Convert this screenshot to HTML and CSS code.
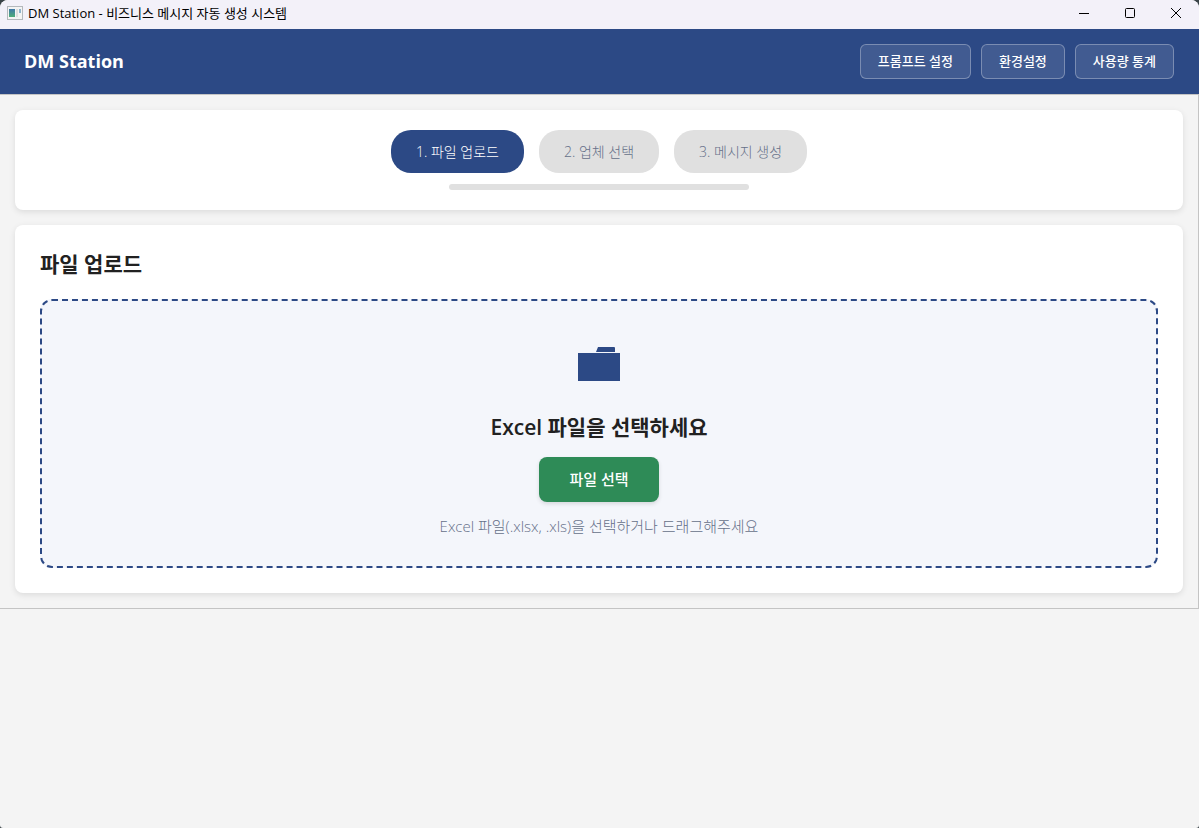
FILE: index.html
```html
<!DOCTYPE html>
<html lang="ko">
<head>
    <meta charset="UTF-8">
    <meta name="viewport" content="width=device-width, initial-scale=1.0">
    <title>DM Station - 비즈니스 메시지 자동 생성 시스템</title>
    <link rel="stylesheet" href="styles.css">
</head>
<body>
    <div class="window">
        <div class="titlebar">
            <svg class="app-icon" width="16" height="14" viewBox="0 0 16 14">
                <defs>
                    <linearGradient id="pane" x1="0" y1="0" x2="0" y2="1">
                        <stop offset="0" stop-color="#3f78a8"/>
                        <stop offset="1" stop-color="#4fae78"/>
                    </linearGradient>
                </defs>
                <rect x="0.5" y="0.5" width="15" height="13" fill="#f4f4f4" stroke="#b4b8bc"/>
                <rect x="2" y="3" width="6" height="8" fill="url(#pane)"/>
                <rect x="9" y="3" width="2" height="8" fill="#dedede"/>
                <rect x="12" y="3" width="2" height="4" fill="#8fb4cc"/>
            </svg>
            <span class="window-title">DM Station - 비즈니스 메시지 자동 생성 시스템</span>
            <div class="window-controls">
                <button type="button" aria-label="최소화">
                    <svg width="12" height="12" viewBox="0 0 12 12"><path d="M1 6.5h10" stroke="#000" fill="none"/></svg>
                </button>
                <button type="button" aria-label="최대화">
                    <svg width="12" height="12" viewBox="0 0 12 12"><rect x="1.5" y="1.5" width="9" height="9" rx="1" stroke="#000" fill="none"/></svg>
                </button>
                <button type="button" aria-label="닫기">
                    <svg width="12" height="12" viewBox="0 0 12 12"><path d="M1 1l10 10M11 1L1 11" stroke="#000" fill="none"/></svg>
                </button>
            </div>
        </div>

        <header class="header">
            <h1>DM Station</h1>
            <nav class="header-buttons">
                <button type="button">프롬프트 설정</button>
                <button type="button">환경설정</button>
                <button type="button">사용량 통계</button>
            </nav>
        </header>

        <main class="content">
            <section class="card steps-card">
                <div class="steps">
                    <div class="step active">1. 파일 업로드</div>
                    <div class="step">2. 업체 선택</div>
                    <div class="step">3. 메시지 생성</div>
                </div>
                <div class="progress"></div>
            </section>

            <section class="card upload-card">
                <h2>파일 업로드</h2>
                <div class="drop-zone">
                    <svg class="folder" width="42" height="34" viewBox="0 0 42 34">
                        <path d="M18 5l2-5h16q1 0 1 1v4zM0 6h42v28H0z" fill="#2c4985"/>
                    </svg>
                    <h3>Excel 파일을 선택하세요</h3>
                    <button type="button" class="select-button">파일 선택</button>
                    <p>Excel 파일(.xlsx, .xls)을 선택하거나 드래그해주세요</p>
                </div>
            </section>
        </main>
    </div>
</body>
</html>
```

FILE: styles.css
```css
* {
    margin: 0;
    padding: 0;
    box-sizing: border-box;
}

body {
    font-family: "Open Sans", "Noto Sans CJK KR", sans-serif;
    font-size: 14px;
    color: #212121;
    background: #3a4448;
}

button {
    font-family: inherit;
    cursor: pointer;
}

.window {
    min-height: 100vh;
    background: #f4f4f4;
    border-radius: 8px 8px 3px 3px;
    overflow: hidden;
}

/* Title bar */
.titlebar {
    display: flex;
    align-items: center;
    height: 29px;
    padding-left: 7px;
    padding-bottom: 3px;
    background: #f3f1f9;
}

.window-title {
    flex: 1;
    margin-left: 5px;
    font-size: 13px;
    line-height: 18px;
    color: #000;
}

.window-controls {
    display: flex;
}

.window-controls button {
    display: flex;
    align-items: center;
    justify-content: center;
    width: 46px;
    height: 26px;
    border: none;
    background: none;
}

/* Header */
.header {
    display: flex;
    align-items: center;
    justify-content: space-between;
    height: 65px;
    padding: 0 25px 0 24px;
    background: #2c4985;
    color: #fff;
}

.header h1 {
    font-size: 18px;
    font-weight: 700;
    line-height: 25px;
}

.header-buttons {
    display: flex;
    gap: 10px;
}

.header-buttons button {
    padding: 8px 17px;
    font-size: 13px;
    font-weight: 500;
    line-height: 17px;
    color: #fff;
    background: rgba(255, 255, 255, 0.1);
    border: 1px solid rgba(255, 255, 255, 0.3);
    border-radius: 6px;
}

/* Content */
.content {
    display: flex;
    flex-direction: column;
    gap: 15px;
    padding: 15px;
    border: 1px solid #c4c4c4;
    border-left: none;
}

.card {
    background: #fff;
    border-radius: 8px;
    box-shadow: 0 2px 6px rgba(0, 0, 0, 0.1);
}

.steps-card {
    display: flex;
    flex-direction: column;
    align-items: center;
    gap: 11px;
    padding: 20px;
}

.steps {
    display: flex;
    gap: 15px;
}

.step {
    padding: 12px 25px;
    font-weight: 300;
    line-height: 19px;
    color: #667089;
    background: #e0e0e0;
    border-radius: 20px;
}

.step.active {
    color: #fff;
    background: #2c4985;
}

.progress {
    width: 300px;
    height: 6px;
    background: #e0e0e0;
    border-radius: 3px;
}

.upload-card {
    padding: 25px;
}

.upload-card h2 {
    margin-bottom: 21px;
    font-size: 21px;
    font-weight: 600;
    line-height: 28px;
}

.drop-zone {
    display: flex;
    flex-direction: column;
    align-items: center;
    padding: 46px 30px 30px;
    background: #f4f6fb;
    border: 2px dashed #2c4985;
    border-radius: 12px;
}

.drop-zone h3 {
    margin: 32px 0 16px;
    font-size: 21px;
    font-weight: 600;
    line-height: 28px;
}

.select-button {
    padding: 12px 30px;
    font-size: 15px;
    font-weight: 500;
    line-height: 21px;
    color: #fff;
    background: #2e8b57;
    border: none;
    border-radius: 8px;
    box-shadow: 0 2px 4px rgba(0, 0, 0, 0.12);
}

.drop-zone p {
    margin-top: 14px;
    font-size: 15px;
    font-weight: 300;
    line-height: 20px;
    color: #667089;
}
```
